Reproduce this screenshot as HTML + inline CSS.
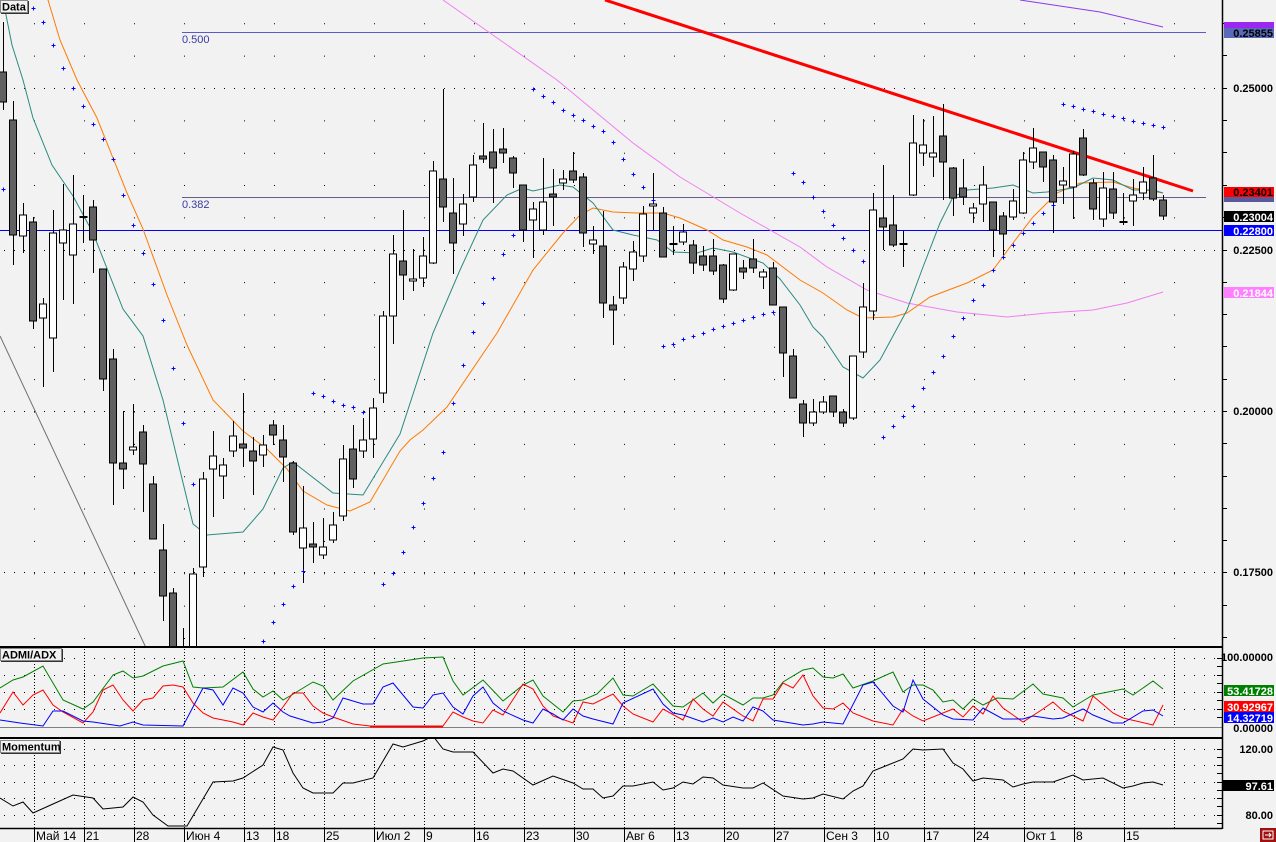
<!DOCTYPE html>
<html><head><meta charset="utf-8"><style>
html,body{margin:0;padding:0;background:#f2f2f2;width:1276px;height:842px;overflow:hidden}
svg{display:block}
.ax{font:bold 11px "Liberation Sans",sans-serif}
.dt{font:12px "Liberation Sans",sans-serif}
.lb{font:bold 11px "Liberation Sans",sans-serif}
</style></head><body>
<svg width="1276" height="842" viewBox="0 0 1276 842" xmlns="http://www.w3.org/2000/svg">
<defs>
<clipPath id="cm"><rect x="0" y="0" width="1222" height="646"/></clipPath>
<clipPath id="ca"><rect x="0" y="648" width="1222" height="89"/></clipPath>
<clipPath id="cmo"><rect x="0" y="739" width="1222" height="89"/></clipPath>
<path id="p" d="M-1.5 0.5h4M0.5 -1.5v4" stroke="#0000ff" stroke-width="1" fill="none" shape-rendering="crispEdges"/>
</defs>
<rect width="1276" height="842" fill="#f2f2f2"/>

<g clip-path="url(#cm)">
<g stroke="#000" stroke-width="1" stroke-dasharray="1 31.35" fill="none">
<path d="M34.5 23.3V646M84.5 23.3V646M134.5 23.3V646M184.5 23.3V646M244.5 23.3V646M274.5 23.3V646M324.5 23.3V646M374.5 23.3V646M424.5 23.3V646M474.5 23.3V646M524.5 23.3V646M574.5 23.3V646M624.5 23.3V646M674.5 23.3V646M724.5 23.3V646M774.5 23.3V646M824.5 23.3V646M874.5 23.3V646M924.5 23.3V646M974.5 23.3V646M1024.5 23.3V646M1074.5 23.3V646M1124.5 23.3V646M1174.5 23.3V646"/>
</g>
<g stroke="#000" stroke-width="1" stroke-dasharray="1 9" fill="none">
<path d="M4 88.5H1222M4 250.5H1222M4 411.5H1222M4 572.5H1222"/>
</g>
<path d="M182 32.5H1206" stroke="#5a5acc" stroke-width="1"/>
<path d="M182 197.5H1206" stroke="#6a5a8a" stroke-width="1"/>
<text x="182" y="43" font-family="Liberation Sans,sans-serif" font-size="11" fill="#3a3aa0">0.500</text>
<text x="182" y="208" font-family="Liberation Sans,sans-serif" font-size="11" fill="#3a3aa0">0.382</text>
<path d="M0 230.5H1222" stroke="#0000ff" stroke-width="1"/>
<polyline points="0,336 147,650" fill="none" stroke="#707070" stroke-width="1"/>
<polyline points="1020,0 1100,12 1163,27" fill="none" stroke="#8a3ae8" stroke-width="1"/>
<polyline points="443,0 557,80 633,143 680,177 740,213 800,247 827,267 867,290 907,303 957,312 1007,317 1047,313 1093,310 1127,303 1163,292" fill="none" stroke="#f27ef2" stroke-width="1"/>
<polyline points="48,0 60,40 77,80 97,118 127,193 143,229 167,295 187,345 213,400 243,431 267,449 287,469 303,491 327,505 350,511 370,502 400,451 410,440 423,430 447,407 497,333 533,270 563,233 580,215 593,208 613,212 637,213 663,213 680,218 707,230 723,240 747,247 767,255 800,280 823,293 847,310 863,318 893,317 907,313 930,297 967,283 993,270 1013,243 1033,217 1057,193 1080,183 1113,182 1133,188 1163,193" fill="none" stroke="#ff7a00" stroke-width="1"/>
<polyline points="3,0 12,45 23,80 33,118 52,165 73,196 93,233 123,309 143,336 163,400 193,524 207,535 243,532 263,509 283,468 293,462 333,493 363,495 400,434 433,333 460,270 483,220 507,195 523,188 533,191 560,185 573,187 593,203 613,230 633,235 657,240 673,252 697,253 713,248 733,252 763,263 780,279 800,305 813,327 823,337 843,367 863,378 880,360 907,310 923,267 940,223 953,197 967,190 993,188 1013,185 1033,193 1047,192 1073,188 1093,178 1113,180 1133,190 1153,190 1163,193" fill="none" stroke="#2a8a80" stroke-width="1"/>
<path d="M605 0L1193 191" stroke="#ff0000" stroke-width="3"/>
<path stroke="#000" stroke-width="1" fill="none" d="M3.5 22V110M13.5 101V265M23.5 203V253M33.5 217V329M43.5 298V387M53.5 210V372M63.5 184V300M73.5 175V304M83.5 195V243M93.5 200V273M103.5 269V391M113.5 349V505M123.5 411V489M133.5 404V455M143.5 425V512M153.5 476V539M163.5 524V621M173.5 588V650M183.5 628V650M193.5 568V650M203.5 472V577M213.5 431V517M223.5 458V499M233.5 421V457M243.5 393V467M253.5 437V495M263.5 435V467M273.5 420V445M283.5 425V482M293.5 461V535M303.5 486V583M313.5 522V563M323.5 518V559M333.5 512V543M343.5 445V521M353.5 425V488M363.5 418V458M373.5 398V458M383.5 311V403M393.5 235V344M403.5 210V300M413.5 249V291M423.5 237V287M433.5 161V264M443.5 89V222M453.5 178V274M463.5 194V236M473.5 155V202M483.5 123V163M493.5 129V203M503.5 128V163M513.5 156V188M523.5 185V242M533.5 202V258M543.5 158V235M553.5 169V226M563.5 170V190M573.5 152V183M583.5 173V247M593.5 226V254M603.5 211V318M613.5 296V345M623.5 262V304M633.5 241V281M643.5 206V262M653.5 173V230M663.5 207V257M673.5 226V255M683.5 224V245M693.5 240V274M703.5 246V271M713.5 239V275M723.5 264V303M733.5 254V291M743.5 260V279M753.5 239V273M763.5 269V289M773.5 262V305M783.5 307V377M793.5 349V398M803.5 400V437M813.5 399V426M823.5 396V414M833.5 396V417M843.5 409V427M853.5 356V420M863.5 283V358M873.5 193V320M883.5 165V250M893.5 195V247M903.5 231V267M913.5 115V196M923.5 119V166M933.5 116V177M943.5 104V200M953.5 167V216M963.5 159V205M973.5 203V223M983.5 166V222M993.5 202V257M1003.5 212V255M1013.5 189V220M1023.5 152V214M1033.5 128V169M1043.5 152V182M1053.5 155V233M1063.5 167V204M1073.5 151V219M1083.5 129V176M1093.5 179V220M1103.5 172V227M1113.5 172V219M1123.5 193V225M1133.5 179V226M1143.5 167V200M1153.5 155V201M1163.5 195V220"/>
<path stroke="#000" stroke-width="2" d="M79.5 217h8M669.5 244h8M899.5 244h8M1119.5 222h8"/>
<path fill="#606060" stroke="#000" stroke-width="1" d="M-0.5 72h7V102h-7zM9.5 120h7V235h-7zM29.5 222h7V321h-7zM89.5 207h7V240h-7zM99.5 269h7V379h-7zM109.5 359h7V463h-7zM119.5 463h7V469h-7zM139.5 432h7V464h-7zM149.5 484h7V539h-7zM159.5 550h7V596h-7zM169.5 593h7V650h-7zM239.5 444h7V448h-7zM249.5 451h7V461h-7zM269.5 425h7V435h-7zM279.5 440h7V457h-7zM289.5 463h7V532h-7zM309.5 544h7V547h-7zM349.5 449h7V479h-7zM399.5 261h7V275h-7zM439.5 179h7V207h-7zM449.5 213h7V243h-7zM479.5 156h7V159h-7zM489.5 152h7V168h-7zM499.5 149h7V153h-7zM509.5 158h7V173h-7zM519.5 185h7V230h-7zM549.5 194h7V197h-7zM569.5 171h7V180h-7zM579.5 177h7V233h-7zM599.5 246h7V303h-7zM609.5 305h7V310h-7zM659.5 213h7V257h-7zM689.5 245h7V263h-7zM699.5 256h7V265h-7zM709.5 256h7V271h-7zM719.5 265h7V299h-7zM739.5 268h7V272h-7zM749.5 259h7V268h-7zM769.5 268h7V305h-7zM779.5 307h7V353h-7zM789.5 356h7V398h-7zM799.5 404h7V423h-7zM829.5 396h7V412h-7zM839.5 412h7V423h-7zM879.5 218h7V227h-7zM889.5 225h7V245h-7zM939.5 136h7V162h-7zM949.5 168h7V198h-7zM959.5 188h7V197h-7zM989.5 202h7V230h-7zM999.5 216h7V234h-7zM1039.5 152h7V167h-7zM1049.5 160h7V202h-7zM1079.5 138h7V175h-7zM1089.5 183h7V209h-7zM1109.5 189h7V213h-7zM1149.5 178h7V199h-7zM1159.5 200h7V216h-7z"/>
<path fill="#fff" stroke="#000" stroke-width="1" d="M19.5 215h7V236h-7zM39.5 304h7V318h-7zM49.5 233h7V338h-7zM59.5 230h7V243h-7zM69.5 224h7V255h-7zM129.5 447h7V450h-7zM189.5 574h7V650h-7zM199.5 479h7V567h-7zM209.5 456h7V469h-7zM219.5 465h7V476h-7zM229.5 436h7V451h-7zM259.5 445h7V455h-7zM299.5 528h7V548h-7zM319.5 547h7V555h-7zM329.5 525h7V540h-7zM339.5 459h7V516h-7zM359.5 440h7V451h-7zM369.5 408h7V439h-7zM379.5 316h7V393h-7zM389.5 254h7V316h-7zM409.5 279h7V281h-7zM419.5 256h7V278h-7zM429.5 171h7V263h-7zM459.5 204h7V224h-7zM469.5 165h7V197h-7zM529.5 209h7V220h-7zM539.5 202h7V230h-7zM559.5 179h7V183h-7zM589.5 240h7V244h-7zM619.5 267h7V298h-7zM629.5 252h7V269h-7zM639.5 214h7V256h-7zM649.5 204h7V206h-7zM679.5 232h7V242h-7zM729.5 254h7V290h-7zM759.5 272h7V277h-7zM809.5 412h7V423h-7zM819.5 402h7V412h-7zM849.5 356h7V418h-7zM859.5 307h7V352h-7zM869.5 210h7V311h-7zM909.5 143h7V195h-7zM919.5 145h7V153h-7zM929.5 153h7V157h-7zM969.5 208h7V213h-7zM979.5 185h7V204h-7zM1009.5 201h7V217h-7zM1019.5 160h7V213h-7zM1029.5 148h7V162h-7zM1059.5 181h7V185h-7zM1069.5 154h7V187h-7zM1099.5 188h7V219h-7zM1129.5 195h7V201h-7zM1139.5 182h7V193h-7z"/>
<g>
<use href="#p" x="3" y="189"/><use href="#p" x="33" y="8"/><use href="#p" x="43" y="22"/><use href="#p" x="53" y="45"/><use href="#p" x="63" y="68"/><use href="#p" x="73" y="88"/><use href="#p" x="83" y="106"/><use href="#p" x="93" y="124"/><use href="#p" x="103" y="139"/><use href="#p" x="113" y="159"/><use href="#p" x="123" y="195"/><use href="#p" x="133" y="225"/><use href="#p" x="143" y="253"/><use href="#p" x="153" y="284"/><use href="#p" x="163" y="320"/><use href="#p" x="173" y="368"/><use href="#p" x="183" y="423"/><use href="#p" x="193" y="484"/>
<use href="#p" x="263" y="641"/><use href="#p" x="273" y="622"/><use href="#p" x="283" y="604"/><use href="#p" x="293" y="586"/><use href="#p" x="303" y="571"/>
<use href="#p" x="313" y="393"/><use href="#p" x="323" y="396"/><use href="#p" x="333" y="401"/><use href="#p" x="343" y="405"/><use href="#p" x="353" y="407"/><use href="#p" x="363" y="412"/>
<use href="#p" x="383" y="584"/><use href="#p" x="393" y="573"/><use href="#p" x="403" y="552"/><use href="#p" x="413" y="527"/><use href="#p" x="423" y="503"/><use href="#p" x="433" y="478"/><use href="#p" x="443" y="452"/><use href="#p" x="453" y="403"/><use href="#p" x="463" y="365"/><use href="#p" x="473" y="332"/><use href="#p" x="483" y="303"/><use href="#p" x="493" y="278"/><use href="#p" x="503" y="254"/><use href="#p" x="513" y="235"/>
<use href="#p" x="533" y="89"/><use href="#p" x="543" y="96"/><use href="#p" x="553" y="102"/><use href="#p" x="563" y="110"/><use href="#p" x="573" y="115"/><use href="#p" x="583" y="120"/><use href="#p" x="593" y="126"/><use href="#p" x="603" y="131"/><use href="#p" x="613" y="142"/><use href="#p" x="623" y="159"/><use href="#p" x="633" y="174"/><use href="#p" x="643" y="187"/><use href="#p" x="653" y="200"/>
<use href="#p" x="663" y="346"/><use href="#p" x="673" y="344"/><use href="#p" x="683" y="339"/><use href="#p" x="693" y="336"/><use href="#p" x="703" y="333"/><use href="#p" x="713" y="329"/><use href="#p" x="723" y="326"/><use href="#p" x="733" y="323"/><use href="#p" x="743" y="320"/><use href="#p" x="753" y="317"/><use href="#p" x="763" y="314"/><use href="#p" x="773" y="312"/>
<use href="#p" x="793" y="173"/><use href="#p" x="803" y="182"/><use href="#p" x="813" y="197"/><use href="#p" x="823" y="211"/><use href="#p" x="833" y="225"/><use href="#p" x="843" y="238"/><use href="#p" x="853" y="250"/><use href="#p" x="863" y="261"/>
<use href="#p" x="883" y="437"/><use href="#p" x="893" y="426"/><use href="#p" x="903" y="416"/><use href="#p" x="913" y="406"/><use href="#p" x="923" y="388"/><use href="#p" x="933" y="372"/><use href="#p" x="943" y="356"/><use href="#p" x="953" y="336"/><use href="#p" x="963" y="318"/><use href="#p" x="973" y="300"/><use href="#p" x="983" y="285"/><use href="#p" x="993" y="270"/><use href="#p" x="1003" y="257"/><use href="#p" x="1013" y="245"/><use href="#p" x="1023" y="233"/><use href="#p" x="1033" y="223"/><use href="#p" x="1043" y="213"/><use href="#p" x="1053" y="205"/>
<use href="#p" x="1063" y="104"/><use href="#p" x="1073" y="106"/><use href="#p" x="1083" y="109"/><use href="#p" x="1093" y="111"/><use href="#p" x="1103" y="114"/><use href="#p" x="1113" y="116"/><use href="#p" x="1123" y="118"/><use href="#p" x="1133" y="121"/><use href="#p" x="1143" y="123"/><use href="#p" x="1153" y="125"/><use href="#p" x="1163" y="127"/>
</g>
</g>
<rect x="0.5" y="0.5" width="27" height="12" fill="#f2f2f2" stroke="#888"/>
<path d="M28.5 1V13.5H1" stroke="#333" fill="none"/>
<text x="2" y="10.5" class="lb">Data</text>

<g clip-path="url(#ca)">
<g stroke="#000" stroke-dasharray="1 9" fill="none"><path d="M4 658.5H1222M4 675.5H1222M4 692.5H1222M4 709.5H1222"/></g>
<g stroke="#000" stroke-dasharray="1 2" fill="none"><path d="M34.5 649V728M84.5 649V728M134.5 649V728M184.5 649V728M244.5 649V728M274.5 649V728M324.5 649V728M374.5 649V728M424.5 649V728M474.5 649V728M524.5 649V728M574.5 649V728M624.5 649V728M674.5 649V728M724.5 649V728M774.5 649V728M824.5 649V728M874.5 649V728M924.5 649V728M974.5 649V728M1024.5 649V728M1074.5 649V728M1124.5 649V728M1174.5 649V728"/></g>
<path d="M0 727.5H1222" stroke="#808080"/>
<polyline fill="none" stroke="#008000" points="0,688 13,680 23,677 43,666 63,700 83,709 93,702 113,675 123,671 133,678 143,676 163,666 183,661 193,687 203,688 223,687 243,672 253,689 263,697 273,691 283,700 290,696 313,682 323,686 333,700 353,681 383,664 423,658 443,657 453,681 463,695 483,680 503,701 523,685 533,680 543,696 563,712 573,701 583,700 597,694 613,678 623,695 633,696 653,684 673,706 683,707 703,693 713,703 723,694 743,705 753,698 763,698 773,695 783,682 803,670 813,668 823,677 833,678 843,674 853,688 873,681 893,672 903,692 913,685 923,685 933,690 943,702 953,700 963,709 973,699 983,705 997,698 1013,699 1033,684 1043,694 1063,698 1073,707 1083,701 1093,695 1123,689 1133,695 1153,681 1163,689"/>
<polyline fill="none" stroke="#ff0000" points="0,713 13,692 23,705 33,695 43,690 53,705 63,712 83,723 93,712 103,690 113,685 123,700 133,711 143,700 153,698 163,686 173,685 183,687 193,703 203,713 213,718 233,722 243,725 253,713 263,717 273,720 283,707 293,693 303,693 313,706 323,713 333,717 353,724 370,726 443,726 453,712 463,717 473,721 483,723 493,710 503,715 523,684 533,689 543,706 553,716 573,723 583,702 593,704 613,694 623,706 633,714 653,722 663,709 683,720 693,699 703,709 713,716 723,702 743,716 753,721 763,699 773,699 783,683 793,688 803,675 813,696 823,708 833,709 843,703 853,713 873,721 893,725 903,709 913,716 923,721 953,709 963,717 973,706 983,714 993,696 1003,708 1023,722 1043,709 1053,702 1063,711 1073,716 1083,721 1093,696 1113,713 1123,718 1153,725 1163,705"/>
<path d="M370 726.5H443" stroke="#ff0000" stroke-width="2"/>
<polyline fill="none" stroke="#0000ff" points="0,720 20,723 43,726 53,711 63,711 83,721 93,722 120,726 133,722 143,725 183,726 203,688 213,690 223,705 233,688 243,693 253,707 263,712 273,703 283,712 290,716 313,723 323,722 333,718 343,698 363,704 373,704 383,687 393,683 413,707 423,708 433,695 443,693 453,707 463,714 473,696 483,687 493,703 503,711 523,720 533,723 543,709 553,714 563,720 573,709 583,716 593,719 613,724 623,703 653,689 663,704 673,713 683,715 703,722 713,718 723,722 733,717 743,721 753,707 763,711 773,720 803,725 813,724 823,722 843,724 863,685 873,682 893,706 903,712 913,680 923,699 943,715 953,719 973,720 983,708 1003,719 1023,719 1033,716 1053,719 1063,718 1083,709 1093,715 1113,723 1123,723 1143,711 1153,710 1163,716"/>
</g>
<rect x="0.5" y="648.5" width="61" height="12" fill="#f2f2f2" stroke="#888"/>
<path d="M62.5 649V661.5H1" stroke="#333" fill="none"/>
<text x="2" y="658.5" class="lb">ADMI/ADX</text>

<g clip-path="url(#cmo)">
<g stroke="#000" stroke-dasharray="1 9" fill="none"><path d="M4 749.5H1222M4 765.5H1222M4 782.5H1222M4 798.5H1222M4 815.5H1222"/></g>
<g stroke="#000" stroke-dasharray="1 2" fill="none"><path d="M34.5 740V828M84.5 740V828M134.5 740V828M184.5 740V828M244.5 740V828M274.5 740V828M324.5 740V828M374.5 740V828M424.5 740V828M474.5 740V828M524.5 740V828M574.5 740V828M624.5 740V828M674.5 740V828M724.5 740V828M774.5 740V828M824.5 740V828M874.5 740V828M924.5 740V828M974.5 740V828M1024.5 740V828M1074.5 740V828M1124.5 740V828M1174.5 740V828"/></g>
<polyline fill="none" stroke="#000" points="0,798 13,806 23,802 33,813 53,804 73,795 93,798 103,809 123,807 133,797 143,802 153,815 168,826 187,826 213,782 233,781 243,778 263,765 273,747 283,750 293,773 303,788 313,793 333,793 343,783 353,783 373,778 383,761 393,744 403,747 423,741 433,736 443,749 453,752 473,752 493,773 503,769 513,771 533,785 553,776 573,783 583,789 593,789 603,798 613,796 623,786 633,786 653,782 663,790 673,788 683,782 693,784 703,777 713,778 723,785 743,788 753,788 763,783 783,796 803,799 813,798 823,794 843,799 853,791 863,786 873,771 903,759 913,749 923,750 943,749 953,763 963,769 973,781 983,778 1003,780 1013,787 1023,784 1033,782 1053,782 1073,775 1083,780 1103,778 1123,788 1133,786 1143,783 1153,782 1163,785"/>
</g>
<rect x="0.5" y="740.5" width="59" height="12" fill="#f2f2f2" stroke="#888"/>
<path d="M60.5 741V753.5H1" stroke="#333" fill="none"/>
<text x="2" y="750.5" class="lb">Momentum</text>

<path d="M0 647H1222M0 738H1222" stroke="#000" stroke-width="2"/>
<path d="M0 828.5H1222" stroke="#000" stroke-width="1.5"/>
<path d="M1222.5 0V829" stroke="#000" stroke-width="1.5"/>

<path stroke="#000" d="M1222 23.5h5M1222 55.5h5M1222 88.5h5M1222 120.5h5M1222 152.5h5M1222 185.5h5M1222 217.5h5M1222 250.5h5M1222 282.5h5M1222 314.5h5M1222 346.5h5M1222 379.5h5M1222 411.5h5M1222 443.5h5M1222 476.5h5M1222 508.5h5M1222 540.5h5M1222 572.5h5M1222 605.5h5M1222 637.5h5M1217 658.5h5M1217 666.5h5M1217 675.5h5M1217 683.5h5M1217 692.5h5M1217 700.5h5M1217 709.5h5M1217 717.5h5M1217 749.5h5M1217 757.5h5M1217 765.5h5M1217 773.5h5M1217 782.5h5M1217 790.5h5M1217 798.5h5M1217 806.5h5M1217 815.5h5M1217 823.5h5"/>

<rect x="1224" y="22" width="50" height="6" fill="#9a28f0"/>
<rect x="1224" y="28" width="50" height="10" fill="#5a6ab8"/>
<text x="1273" y="37" text-anchor="end" class="ax" fill="#000">0.25855</text>
<text x="1273" y="92" text-anchor="end" class="ax" fill="#000">0.25000</text>
<rect x="1224" y="187" width="50" height="10" fill="#ff0000"/>
<text x="1273" y="196" text-anchor="end" class="ax" fill="#000">0.23401</text>
<rect x="1224" y="197" width="50" height="5" fill="#5a5a9a"/>
<rect x="1224" y="211" width="50" height="11" fill="#000"/>
<text x="1273" y="221" text-anchor="end" class="ax" fill="#fff">0.23004</text>
<rect x="1224" y="225" width="50" height="11" fill="#0000ff"/>
<text x="1273" y="235" text-anchor="end" class="ax" fill="#fff">0.22800</text>
<text x="1273" y="254" text-anchor="end" class="ax" fill="#000">0.22500</text>
<rect x="1224" y="287" width="50" height="11" fill="#ff80ff"/>
<text x="1273" y="297" text-anchor="end" class="ax" fill="#fff">0.21844</text>
<text x="1273" y="415" text-anchor="end" class="ax" fill="#000">0.20000</text>
<text x="1273" y="576" text-anchor="end" class="ax" fill="#000">0.17500</text>

<text x="1273" y="661" text-anchor="end" class="ax" fill="#000">100.00000</text>
<rect x="1224" y="685" width="50" height="11" fill="#008000"/>
<text x="1273" y="695" text-anchor="end" class="ax" fill="#fff">53.41728</text>
<rect x="1224" y="701" width="50" height="11" fill="#ff0000"/>
<text x="1273" y="711" text-anchor="end" class="ax" fill="#fff">30.92967</text>
<rect x="1224" y="712" width="50" height="11" fill="#0000ff"/>
<text x="1273" y="722" text-anchor="end" class="ax" fill="#fff">14.32719</text>
<text x="1273" y="732" text-anchor="end" class="ax" fill="#000">0.00000</text>

<text x="1273" y="753" text-anchor="end" class="ax" fill="#000">120.00</text>
<rect x="1222" y="780" width="52" height="11" fill="#000"/>
<text x="1273" y="790" text-anchor="end" class="ax" fill="#fff">97.61</text>
<text x="1273" y="819" text-anchor="end" class="ax" fill="#000">80.00</text>

<path stroke="#000" d="M34.5 829V842M84.5 829V842M134.5 829V842M184.5 829V842M244.5 829V842M274.5 829V842M324.5 829V842M374.5 829V842M424.5 829V842M474.5 829V842M524.5 829V842M574.5 829V842M624.5 829V842M674.5 829V842M724.5 829V842M774.5 829V842M824.5 829V842M874.5 829V842M924.5 829V842M974.5 829V842M1024.5 829V842M1074.5 829V842M1124.5 829V842"/>
<g class="dt" fill="#000">
<text x="36" y="840">Май 14</text><text x="86" y="840">21</text><text x="136" y="840">28</text><text x="186" y="840">Июн 4</text><text x="246" y="840">13</text><text x="276" y="840">18</text><text x="326" y="840">25</text><text x="376" y="840">Июл 2</text><text x="426" y="840">9</text><text x="476" y="840">16</text><text x="526" y="840">23</text><text x="576" y="840">30</text><text x="626" y="840">Авг 6</text><text x="676" y="840">13</text><text x="726" y="840">20</text><text x="776" y="840">27</text><text x="826" y="840">Сен 3</text><text x="876" y="840">10</text><text x="926" y="840">17</text><text x="976" y="840">24</text><text x="1026" y="840">Окт 1</text><text x="1076" y="840">8</text><text x="1126" y="840">15</text>
</g>
<rect x="1260" y="828" width="16" height="14" fill="#a01010"/>
<rect x="1263" y="831" width="10" height="8" fill="none" stroke="#fff"/>
<path d="M1265 835h6M1269 833l2 2-2 2" stroke="#fff" fill="none"/>
</svg>
</body></html>
